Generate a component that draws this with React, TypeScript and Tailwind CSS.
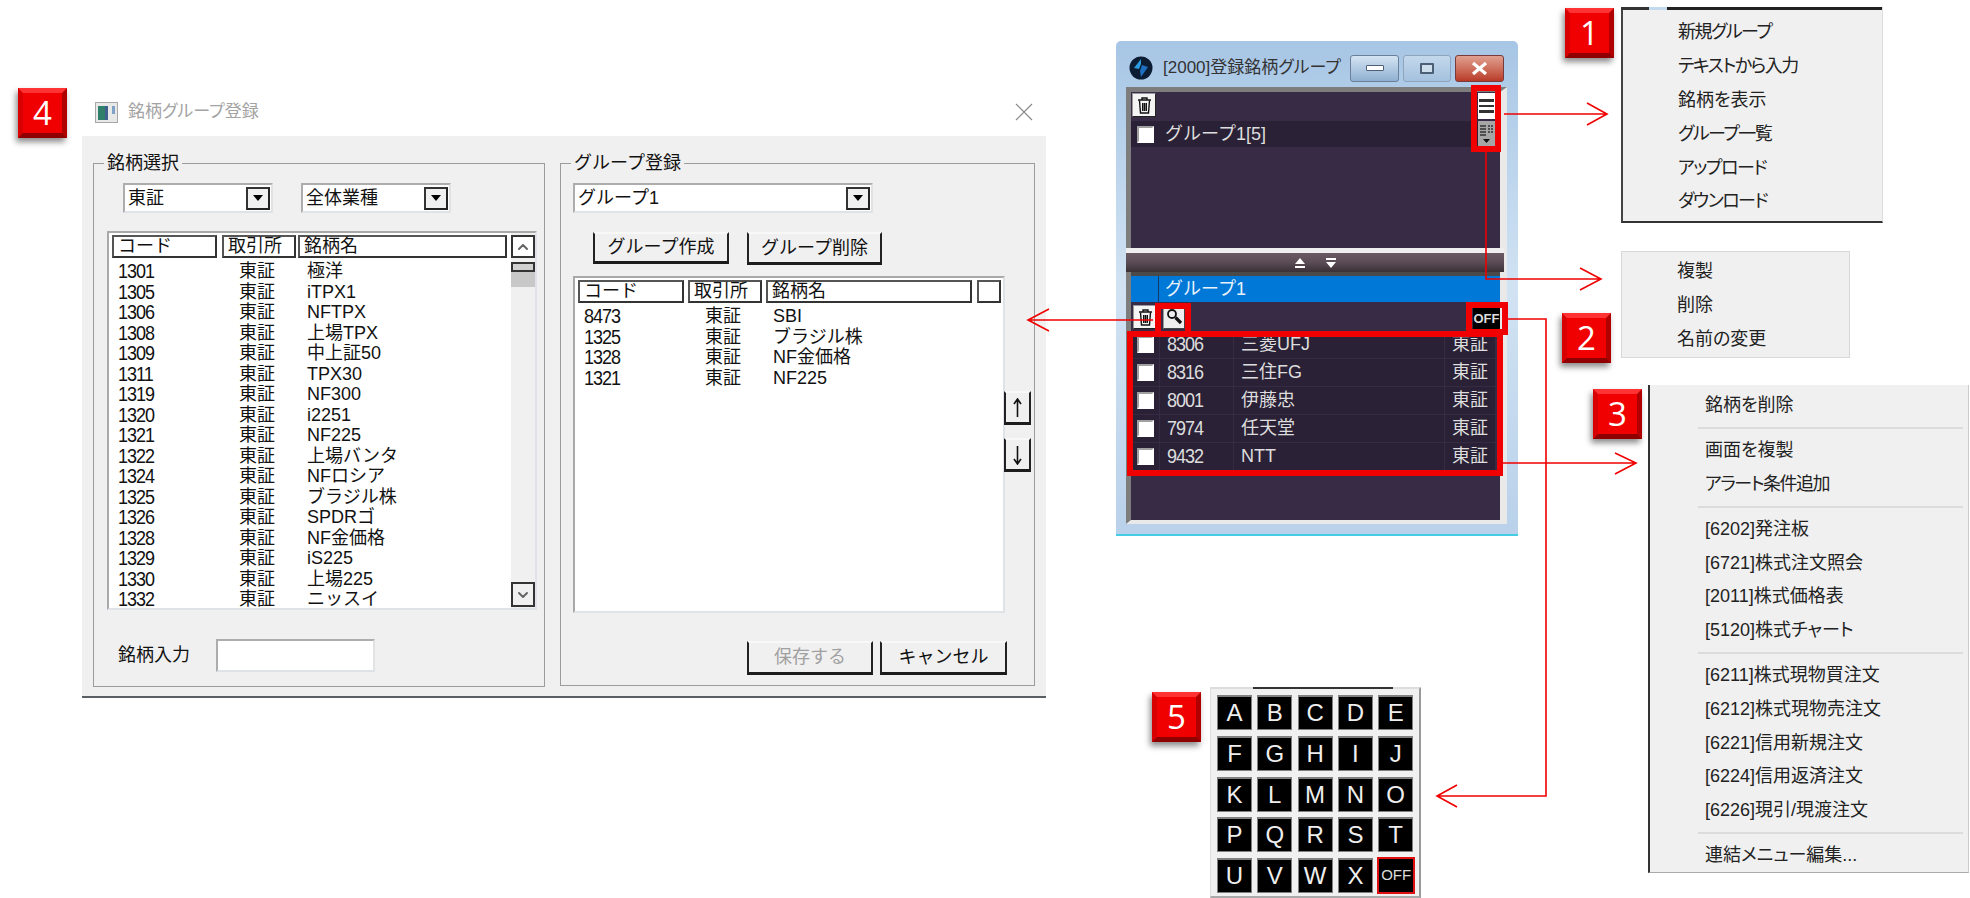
import type { ReactNode } from "react";
import { ChevronDown, ChevronUp } from "lucide-react";

const stockRows = [
  ["1301", "極洋"],
  ["1305", "iTPX1"],
  ["1306", "NFTPX"],
  ["1308", "上場TPX"],
  ["1309", "中上証50"],
  ["1311", "TPX30"],
  ["1319", "NF300"],
  ["1320", "i2251"],
  ["1321", "NF225"],
  ["1322", "上場バンタ"],
  ["1324", "NFロシア"],
  ["1325", "ブラジル株"],
  ["1326", "SPDRゴ"],
  ["1328", "NF金価格"],
  ["1329", "iS225"],
  ["1330", "上場225"],
  ["1332", "ニッスイ"],
];

const groupRows = [
  ["8473", "SBI"],
  ["1325", "ブラジル株"],
  ["1328", "NF金価格"],
  ["1321", "NF225"],
];

const watchRows = [
  ["8306", "三菱UFJ"],
  ["8316", "三住FG"],
  ["8001", "伊藤忠"],
  ["7974", "任天堂"],
  ["9432", "NTT"],
];

const menu1 = ["新規グループ", "テキストから入力", "銘柄を表示", "グループ一覧", "アップロード", "ダウンロード"];
const menu2 = ["複製", "削除", "名前の変更"];
const menu3 = [
  ["銘柄を削除"],
  ["画面を複製", "アラート条件追加"],
  ["[6202]発注板", "[6721]株式注文照会", "[2011]株式価格表", "[5120]株式チャート"],
  ["[6211]株式現物買注文", "[6212]株式現物売注文", "[6221]信用新規注文", "[6224]信用返済注文", "[6226]現引/現渡注文"],
  ["連結メニュー編集..."],
];

const tightItems = new Set([
  "新規グループ",
  "テキストから入力",
  "グループ一覧",
  "アップロード",
  "ダウンロード",
  "アラート条件追加",
]);

const keys = "ABCDEFGHIJKLMNOPQRSTUVWX".split("");

function Badge({ n, className }: { n: number; className: string }) {
  return (
    <div
      className={`absolute flex h-[50px] w-[49px] items-center justify-center border-[5px] border-t-[#f33] border-r-[#b00000] border-b-[#8f0000] border-l-[#d80000] bg-[#f00000] font-['Open_Sans',sans-serif] text-[33px] text-white shadow-[-2px_4px_6px_rgba(0,0,0,0.45)] ${className}`}
    >
      {n}
    </div>
  );
}

function ArrowBox() {
  return (
    <div className="flex h-[23px] w-[24px] items-center justify-center border-2 border-[#333] border-r-[#222] border-b-[#222] bg-[#f0f0f0]">
      <div className="h-0 w-0 border-x-[5px] border-t-[6px] border-x-transparent border-t-black" />
    </div>
  );
}

function Combo({ label, width }: { label: string; width: string }) {
  return (
    <div
      className={`flex h-[30px] items-center justify-between border-2 border-[#adadad] border-r-[#e2e2e2] border-b-[#dfe3e8] bg-white pl-[3px] pr-[1px] text-[18px] ${width}`}
    >
      {label}
      <ArrowBox />
    </div>
  );
}

function Panel({ title, className, children }: { title: string; className: string; children: ReactNode }) {
  return (
    <div className={`relative border border-[#9c9c9c] ${className}`}>
      <div className="absolute left-[10px] top-[-13px] bg-[#f0f0f0] px-[3px] text-[18px] leading-[24px]">{title}</div>
      {children}
    </div>
  );
}

function HeadCell({ width, children }: { width: string; children?: ReactNode }) {
  return (
    <div
      className={`flex h-[23px] items-center border-2 border-[#555] border-r-[#333] border-b-[#333] px-[4px] text-[18px] ${width}`}
    >
      {children}
    </div>
  );
}

function Rows({ rows }: { rows: string[][] }) {
  return (
    <div className="mt-[3px]">
      {rows.map(([code, name]) => (
        <div key={code} className="grid h-[20.5px] grid-cols-[121px_68px_1fr] items-center pl-[9px] text-[18px] leading-none">
          <span className="inline-block origin-center scale-y-[1.15] tracking-[-1px]">{code}</span>
          <span>東証</span>
          <span>{name}</span>
        </div>
      ))}
    </div>
  );
}

function WinButton({ className, children }: { className: string; children: ReactNode }) {
  return (
    <div
      className={`flex items-center justify-center border-x-2 border-b-[3px] border-x-[#222] border-b-[#1c1c1c] border-t-2 border-t-[#f8f8f8] text-[18px] ${className}`}
    >
      {children}
    </div>
  );
}

function MoveArrow({ down }: { down?: boolean }) {
  return (
    <svg width="11" height="20" viewBox="0 0 11 20" fill="none" stroke="#111" strokeWidth="1.6" className={down ? "rotate-180" : ""}>
      <path d="M5.5 1v18M2 6l3.5-5L9 6" />
    </svg>
  );
}

function RegisterDialog() {
  return (
    <div className="absolute left-[82px] top-[88px] w-[964px]">
      <div className="flex h-[48px] items-center justify-between pl-[13px] pr-[13px]">
        <div className="flex items-center gap-[10px] text-[17px] text-[#a3a3a3] [font-feature-settings:'palt']">
          <svg width="23" height="21" viewBox="0 0 23 21">
            <rect x="0.5" y="0.5" width="22" height="20" fill="#e8e8e8" stroke="#a8a8a8" />
            <rect x="3" y="4" width="7" height="14" fill="#2f7f6a" />
            <rect x="10" y="4" width="3" height="14" fill="#3f5f8f" />
            <rect x="17" y="4" width="3" height="8" fill="#7fa3c7" />
          </svg>
          銘柄グループ登録
        </div>
        <svg width="18" height="18" viewBox="0 0 18 18" stroke="#8a8a8a" strokeWidth="1.2">
          <path d="M1 1 17 17M17 1 1 17" />
        </svg>
      </div>

      <div className="flex h-[562px] gap-[15px] border-b-2 border-[#5a5f66] bg-[#f0f0f0] pl-[11px] pt-[27px]">
        <Panel title="銘柄選択" className="h-[524px] w-[452px]">
          <div className="ml-[29px] mt-[19px] flex gap-[28px]">
            <Combo label="東証" width="w-[150px]" />
            <Combo label="全体業種" width="w-[150px]" />
          </div>
          <div className="ml-[13px] mt-[18px] flex h-[379px] w-[430px] overflow-hidden border-2 border-[#a9a9a9] border-r-[#dfe3e8] border-b-[#dfe3e8] bg-white">
            <div className="w-[402px]">
              <div className="ml-[3px] mt-[2px] flex">
                <HeadCell width="w-[105px]">コード</HeadCell>
                <HeadCell width="ml-[5px] w-[74px]">取引所</HeadCell>
                <HeadCell width="ml-[2px] w-[209px]">銘柄名</HeadCell>
              </div>
              <Rows rows={stockRows} />
            </div>
            <div className="flex w-[24px] flex-col bg-[#f0f0f0] pt-[2px]">
              <div className="flex h-[23px] items-center justify-center border-2 border-[#333] bg-white">
                <ChevronUp size={16} strokeWidth={3} color="#666" />
              </div>
              <div className="mt-[4px] h-[10px] border-2 border-[#333] bg-[#d0d0d0]" />
              <div className="h-[15px] bg-[#c8c8c8]" />
              <div className="mt-auto mb-[1px] flex h-[25px] items-center justify-center border-2 border-[#333] bg-[#f0f0f0]">
                <ChevronDown size={16} strokeWidth={3} color="#666" />
              </div>
            </div>
          </div>
          <div className="ml-[24px] mt-[29px] flex items-center">
            <span className="w-[98px] text-[18px]">銘柄入力</span>
            <div className="h-[33px] w-[159px] border-2 border-[#adadad] border-r-[#e2e2e2] border-b-[#dfe3e8] bg-white" />
          </div>
        </Panel>

        <Panel title="グループ登録" className="h-[523px] w-[475px]">
          <div className="ml-[12px] mt-[19px]">
            <Combo label="グループ1" width="w-[300px]" />
          </div>
          <div className="ml-[32px] mt-[19px] flex gap-[18px]">
            <WinButton className="h-[32px] w-[136px]">グループ作成</WinButton>
            <WinButton className="h-[33px] w-[135px]">グループ削除</WinButton>
          </div>
          <div className="ml-[12px] mt-[11px] flex">
            <div className="h-[337px] w-[432px] border-2 border-[#a9a9a9] border-r-[#dfe3e8] border-b-[#dfe3e8] bg-white">
              <div className="ml-[3px] mt-[2px] flex">
                <HeadCell width="w-[106px]">コード</HeadCell>
                <HeadCell width="ml-[4px] w-[74px]">取引所</HeadCell>
                <HeadCell width="ml-[4px] w-[206px]">銘柄名</HeadCell>
                <HeadCell width="ml-[5px] w-[24px]" />
              </div>
              <Rows rows={groupRows} />
            </div>
            <div className="ml-[-1px] mt-[115px] flex flex-col gap-[13px]">
              <WinButton className="h-[34px] w-[27px]">
                <MoveArrow />
              </WinButton>
              <WinButton className="h-[34px] w-[27px]">
                <MoveArrow down />
              </WinButton>
            </div>
          </div>
          <div className="ml-[186px] mt-[28px] flex gap-[7px]">
            <WinButton className="h-[34px] w-[126px] text-[#a0a0a0]">保存する</WinButton>
            <WinButton className="h-[34px] w-[127px]">キャンセル</WinButton>
          </div>
        </Panel>
      </div>
    </div>
  );
}

function TrashIcon() {
  return (
    <svg width="15" height="18" viewBox="0 0 15 18" fill="none" stroke="#111" strokeWidth="1.4">
      <path d="M1 4h13M5 4V2h5v2" />
      <path d="M2.5 4.5 3.5 17h8l1-12.5" />
      <path d="M5.7 7v8M7.5 7v8M9.3 7v8" />
    </svg>
  );
}

function TrashButton() {
  return (
    <div className="flex h-[24px] w-[24px] items-center justify-center border border-[#999] border-r-[#222] border-b-[#222] bg-[#f4f4f4]">
      <TrashIcon />
    </div>
  );
}

function CheckBox() {
  return <div className="h-[17px] w-[17px] border-2 border-[#a0a0a0] border-r-white border-b-white bg-white" />;
}

function StockWindow() {
  return (
    <div className="absolute left-[1116px] top-[41px] h-[495px] w-[402px] rounded-t-[5px] border-b-2 border-b-[#45cde6] bg-gradient-to-b from-[#a7c6e5] via-[#d1e3f3] to-[#b9d1ea] px-[10px]">
      <div className="flex h-[46px] items-center pt-[8px]">
        <svg className="ml-[3px]" width="24" height="24" viewBox="0 0 24 24">
          <circle cx="12" cy="12" r="11.5" fill="#0c1c33" />
          <path d="M12 3 5 12l5 1 2-5z" fill="#2d9be0" />
          <path d="M13 9 19 11 12 21l-1-6z" fill="#1f6fc0" />
        </svg>
        <span className="ml-[10px] text-[17px] text-[#333] [font-feature-settings:'palt']">[2000]登録銘柄グループ</span>
        <div className="ml-auto mr-[4px] flex gap-[4px]">
          <div className="flex h-[27px] w-[49px] items-center justify-center rounded-[3px] border border-[#6a7f99] bg-gradient-to-b from-[#d5e4f3] to-[#8fb0d1]">
            <div className="h-[6px] w-[18px] rounded-[1px] border border-[#4d5f75] bg-white" />
          </div>
          <div className="flex h-[27px] w-[48px] items-center justify-center rounded-[3px] border border-[#8ea5bd] bg-gradient-to-b from-[#c4d8ec] to-[#a4c1de]">
            <div className="h-[11px] w-[14px] rounded-[1px] border-2 border-[#4d5f75] bg-[#cfdeed]" />
          </div>
          <div className="flex h-[27px] w-[49px] items-center justify-center rounded-[3px] border border-[#7a3a3a] bg-gradient-to-b from-[#e0a090] to-[#b83a28]">
            <svg width="17" height="13" viewBox="0 0 17 13" stroke="#fff" strokeWidth="3.2">
              <path d="M2 1 15 12M15 1 2 12" />
            </svg>
          </div>
        </div>
      </div>

      <div className="h-[437px] w-[381px] border-t-[5px] border-r-[7px] border-b-[4px] border-l-[5px] border-t-[#7d7d7d] border-r-[#e9e9e9] border-b-[#e9e9e9] border-l-[#7d7d7d] bg-[#372b45]">
        <div className="h-[156px]">
          <div className="flex h-[29px] items-start justify-between pl-[1px] pt-[1px]">
            <TrashButton />
            <div className="mr-[5px] flex h-[26px] w-[17px] flex-col justify-center gap-[3px] bg-white px-[1px]">
              <div className="h-[2.5px] bg-[#333]" />
              <div className="h-[2.5px] bg-[#333]" />
              <div className="h-[2.5px] bg-[#333]" />
            </div>
          </div>
          <div className="flex h-[26px] items-center">
            <div className="flex h-full w-[347px] items-center bg-[#2a2136] pl-[6px]">
              <CheckBox />
              <span className="ml-[11px] text-[18px] text-[#ddd]">グループ1[5]</span>
            </div>
            <svg width="17" height="26" viewBox="0 0 17 26">
              <rect width="17" height="26" fill="#a6a6a6" />
              <path d="M2 5h6M2 8h6M2 11h6M2 14h6" stroke="#333" strokeWidth="1.5" />
              <path d="M10 5h5M10 8h5M10 11h5" stroke="#333" strokeWidth="1.5" strokeDasharray="2 1" />
              <path d="M5 18h7l-3.5 4z" fill="#111" />
            </svg>
          </div>
        </div>
        <div className="mr-[-4px] ml-[-5px] h-[5px] bg-[#efefef]" />
        <div className="mr-[-4px] ml-[-5px] flex h-[19px] items-center justify-center gap-[19px] bg-gradient-to-b from-[#6a5a62] via-[#5a4c55] to-[#3b3036]">
          <svg width="12" height="12" viewBox="0 0 12 12" fill="#fff">
            <path d="M6 1 11 7H1zM1 9h10v2H1z" />
          </svg>
          <svg width="12" height="12" viewBox="0 0 12 12" fill="#fff">
            <path d="M1 1h10v2H1zM1 5h10L6 11z" />
          </svg>
        </div>
        <div className="h-[4px] bg-[#4a4a4a]" />
        <div className="flex h-[26px] items-center bg-[#0078d7]">
          <div className="h-full w-[28px] border-r border-[#123a66]" />
          <span className="pl-[6px] text-[18px] text-[#e8f2fb]">グループ1</span>
        </div>
        <div className="flex h-[29px] items-center gap-[6px] pl-[2px] pr-0">
          <TrashButton />
          <div className="flex h-[24px] w-[22px] items-center justify-center border border-[#999] border-r-[#444] border-b-[#444] bg-[#eee]">
            <svg width="17" height="17" viewBox="0 0 17 17" fill="none" stroke="#111">
              <circle cx="6" cy="6" r="4" strokeWidth="1.8" />
              <path d="M9.5 9.5 15 15" strokeWidth="3.2" />
            </svg>
          </div>
          <div className="ml-auto mt-[4px] flex h-[22px] w-[27px] items-center justify-center bg-black text-[13px] font-bold text-[#ddd]">
            OFF
          </div>
        </div>
        <div className="mr-[5px]">
          {watchRows.map(([code, name]) => (
            <div
              key={code}
              className="grid h-[28px] grid-cols-[28px_74px_211px_1fr] items-center border-b border-[#352b42] bg-[#2a2136] text-[18px] text-[#ddd]"
            >
              <div className="flex justify-center">
                <CheckBox />
              </div>
              <span className="inline-block origin-center scale-y-[1.15] border-l border-[#352b42] pl-[7px] tracking-[-1px]">{code}</span>
              <span className="border-l border-[#352b42] pl-[7px]">{name}</span>
              <span className="border-l border-[#352b42] pl-[7px]">東証</span>
            </div>
          ))}
        </div>
      </div>
    </div>
  );
}

function Highlights() {
  return (
    <>
      <div className="absolute left-[1471px] top-[85px] h-[67px] w-[30px] border-[6px] border-[#f00000]" />
      <div className="absolute left-[1127px] top-[331px] h-[145px] w-[376px] border-[6px] border-[#f00000]" />
      <div className="absolute left-[1155px] top-[303px] h-[34px] w-[36px] border-[6px] border-[#f00000]" />
      <div className="absolute left-[1466px] top-[302px] h-[33px] w-[42px] border-[6px] border-[#f00000]" />
    </>
  );
}

function Arrows() {
  return (
    <svg className="absolute left-0 top-0" width="1970" height="898" fill="none" stroke="#f00000" strokeWidth="1.6">
      <path d="M1504 114H1607M1587 103 1607 114 1587 125" />
      <path d="M1486 152V279H1601M1580 268 1601 279 1580 290" />
      <path d="M1153 320H1028M1049 309 1028 320 1049 331" />
      <path d="M1508 319H1546V796H1437M1457 785 1437 796 1457 807" />
      <path d="M1503 463H1636M1615 453 1636 463 1615 474" />
    </svg>
  );
}

function MenuItem({ label }: { label: string }) {
  return (
    <div
      className={`flex h-[33.8px] items-center pl-[55px] text-[18px] text-[#222] [font-feature-settings:'palt'] ${
        tightItems.has(label) ? "tracking-[-1.5px]" : ""
      }`}
    >
      {label}
    </div>
  );
}

function Menus() {
  return (
    <>
      <div className="absolute left-[1621px] top-[7px] h-[216px] w-[262px] border-b-2 border-l-2 border-r border-b-[#333] border-l-[#444] border-r-[#ddd] bg-[#f0f0f0]">
        <div className="ml-[-2px] flex h-[3px]">
          <div className="w-[28px] bg-[#333]" />
          <div className="w-[18px] bg-[#c3d9ee]" />
          <div className="flex-1 bg-[#222]" />
        </div>
        <div className="pt-[6px]">
          {menu1.map((m) => (
            <MenuItem key={m} label={m} />
          ))}
        </div>
      </div>

      <div className="absolute left-[1621px] top-[251px] h-[107px] w-[229px] border border-[#d8d8d8] bg-[#f0f0f0] pt-[3px]">
        {menu2.map((m) => (
          <MenuItem key={m} label={m} />
        ))}
      </div>

      <div className="absolute left-[1648px] top-[385px] h-[488px] w-[321px] border-b border-l-2 border-r border-b-[#aaa] border-l-[#333] border-r-[#ccc] bg-[#f0f0f0] pt-[4px]">
        {menu3.map((group, i) => (
          <div key={i}>
            {i > 0 && <div className="my-[4.5px] ml-[48px] mr-[5px] h-[2px] bg-[#dcdcdc]" />}
            {group.map((m) => (
              <MenuItem key={m} label={m} />
            ))}
          </div>
        ))}
      </div>
    </>
  );
}

function KeyCell({ children, off }: { children: ReactNode; off?: boolean }) {
  return (
    <div
      className={
        off
          ? "flex h-[37px] w-[38px] translate-x-[-1px] translate-y-[-1px] items-center justify-center border-2 border-[#e01010] bg-black text-[15px] text-[#ddd]"
          : "flex h-[35px] w-[35px] items-center justify-center border border-t-2 border-[#808080] bg-black text-[24px] text-[#eee]"
      }
    >
      {children}
    </div>
  );
}

function KeyPad() {
  return (
    <div className="absolute left-[1210px] top-[687px] h-[211px] w-[211px] border-t-2 border-r-2 border-b-2 border-l border-t-[#ddd] border-r-[#999] border-b-[#aaa] border-l-[#ddd] bg-[#f0f0f0] pl-[6px] pt-[7px]">
      <div className="ml-[36px] mb-[6px] mt-[-9px] h-[2px] w-[140px] bg-[#333]" />
      <div className="grid grid-cols-[repeat(5,35px)] gap-x-[5.3px] gap-y-[5.8px]">
        {keys.map((k) => (
          <KeyCell key={k}>{k}</KeyCell>
        ))}
        <KeyCell off>OFF</KeyCell>
      </div>
    </div>
  );
}

export default function App() {
  return (
    <div className="relative h-[898px] w-[1970px] overflow-hidden bg-white font-['Liberation_Sans','Noto_Sans_CJK_JP',sans-serif] text-[#111]">
      <RegisterDialog />
      <StockWindow />
      <Highlights />
      <Arrows />
      <Menus />
      <KeyPad />
      <Badge n={1} className="left-[1565px] top-[8px]" />
      <Badge n={2} className="left-[1562px] top-[313px]" />
      <Badge n={3} className="left-[1593px] top-[389px]" />
      <Badge n={4} className="left-[18px] top-[88px]" />
      <Badge n={5} className="left-[1152px] top-[692px]" />
    </div>
  );
}
